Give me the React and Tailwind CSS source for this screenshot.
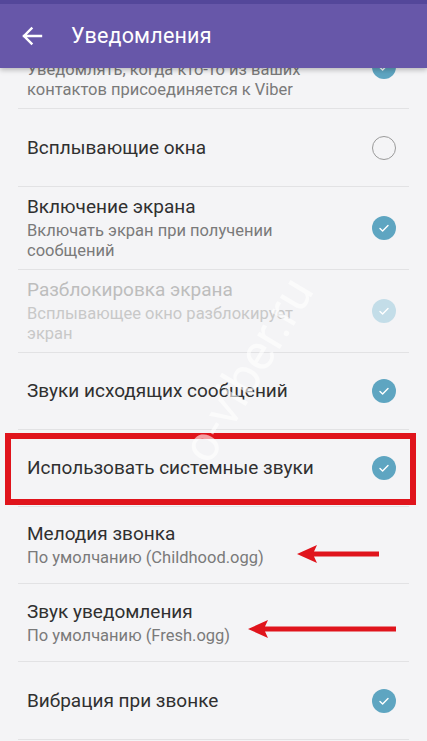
import React from "react";

const rows = [
  { id: "join", h: "h-[83px]", title: "Уведомлять о новых контактах", sub: ["Уведомлять, когда кто-то из ваших", "контактов присоединяется к Viber"], checked: true },
  { id: "popup", h: "h-[78px]", title: "Всплывающие окна", checked: false },
  { id: "screen", h: "h-[83px]", title: "Включение экрана", sub: ["Включать экран при получении", "сообщений"], checked: true },
  { id: "unlock", h: "h-[83px]", title: "Разблокировка экрана", sub: ["Всплывающее окно разблокирует", "экран"], checked: true, disabled: true },
  { id: "outgoing", h: "h-[77px]", title: "Звуки исходящих сообщений", checked: true },
  { id: "system", h: "h-[77px]", title: "Использовать системные звуки", checked: true, boxed: true },
  { id: "ring", h: "h-[77px]", title: "Мелодия звонка", sub: ["По умолчанию (Childhood.ogg)"], arrow: "ring" },
  { id: "notify", h: "h-[78px]", title: "Звук уведомления", sub: ["По умолчанию (Fresh.ogg)"], arrow: "notify" },
  { id: "vibrate", h: "h-[78px]", title: "Вибрация при звонке", checked: true },
];

const Check = ({ checked, disabled }) => {
  if (checked === undefined) return null;
  if (!checked) {
    return <div className="w-6 h-6 rounded-full border border-[#9a9a9a] shrink-0" />;
  }
  return (
    <div
      className={
        "w-6 h-6 rounded-full shrink-0 flex items-center justify-center " +
        (disabled ? "bg-[#c3dde8]" : "bg-[#5ea5c1]")
      }
    >
      <svg width="14" height="14" viewBox="0 0 14 14" fill="none">
        <path d="M3 7.4l2.6 2.5L11 4.4" stroke="white" strokeWidth="1.4" strokeLinecap="round" strokeLinejoin="round" />
      </svg>
    </div>
  );
};

// красная стрелка влево
const Arrow = ({ length, className }) => (
  <svg
    className={className}
    width={length}
    height="20"
    viewBox={`0 0 ${length} 20`}
  >
    <path d={`M0 10 L20 1 L17 7.5 L${length} 7.5 L${length} 12.5 L17 12.5 L20 19 Z`} fill="#e0141c" />
  </svg>
);

const Row = ({ row }) => {
  const titleColor = row.disabled ? "text-[#bdbdbd]" : "text-[#303030]";
  const subColor = row.disabled ? "text-[#c8c8c8]" : "text-[#7a7a7a]";
  return (
    <div className={"relative mx-[18px] border-b border-[#e2e2e4] " + row.h}>
      <div className="h-full pl-[9px] pr-[13px] flex items-center justify-between">
        <div className="flex flex-col">
          <div className={"text-[19px] leading-[24px] " + titleColor}>{row.title}</div>
          {row.sub && (
            <div className={"mt-[2px] text-[16.5px] leading-[20px] " + subColor}>
              {row.sub.map((s) => (
                <div key={s}>{s}</div>
              ))}
            </div>
          )}
        </div>
        <Check checked={row.checked} disabled={row.disabled} />
      </div>

      {row.boxed && (
        <div className="absolute left-[-13px] right-[-7px] top-[3px] bottom-[1px] border-[6px] border-[#e0141c] pointer-events-none" />
      )}
      {row.arrow === "ring" && (
        <Arrow length={82} className="absolute left-[279px] top-[37px]" />
      )}
      {row.arrow === "notify" && (
        <Arrow length={148} className="absolute left-[230px] top-[35px]" />
      )}
    </div>
  );
};

export default function App() {
  return (
    <div
      className="relative w-[427px] h-[741px] overflow-hidden bg-[#f4f4f6]"
      style={{ fontFamily: "Roboto, 'Noto Sans', sans-serif" }}
    >
      {/* Шапка */}
      <div className="relative z-10 h-[68px] bg-[#6757a9] shadow-[0_2px_5px_rgba(0,0,0,0.25)] flex flex-col">
        <div className="h-[4px] bg-[#54479a]" />
        <div className="flex-1 flex items-center">
          <button className="ml-[21px] w-[22px] h-[22px] flex items-center justify-center">
            <svg width="22" height="22" viewBox="0 0 22 22" fill="none">
              <path d="M20 11H3M10.5 3.5L3 11l7.5 7.5" stroke="white" strokeWidth="2.4" strokeLinecap="square" />
            </svg>
          </button>
          <div className="ml-[28px] text-white text-[21.5px] tracking-[0.2px]">Уведомления</div>
        </div>
      </div>

      {/* Список настроек */}
      <div className="mt-[-42px]">
        {rows.map((r) => (
          <Row key={r.id} row={r} />
        ))}
      </div>

      {/* водяной знак */}
      <div className="absolute left-[248px] top-[370px] -translate-x-1/2 -translate-y-1/2 -rotate-[59deg] text-[50px] text-white/60 whitespace-nowrap pointer-events-none z-20">
        o-viber.ru
      </div>
    </div>
  );
}
